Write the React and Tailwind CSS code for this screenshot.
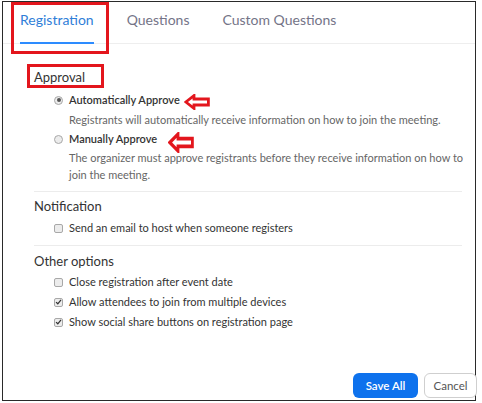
import React from "react";

const Arrow = ({ className }) => (
  <svg className={className} viewBox="0 0 26 16" preserveAspectRatio="none">
    <path d="M1.8 8 L10 1.6 L10 5 L24.4 5 L24.4 11 L10 11 L10 14.4 Z" fill="#fff" stroke="#e3161d" strokeWidth="2.8" strokeLinejoin="miter" />
  </svg>
);

const Radio = ({ checked }) => (
  <span className="w-[9px] h-[9px] rounded-full border border-[#a8a8a8] bg-[#ececec] flex items-center justify-center shrink-0">
    {checked && <span className="w-[4px] h-[4px] rounded-full bg-[#555]" />}
  </span>
);

const Check = ({ checked }) => (
  <span className="w-[9px] h-[9px] rounded-[2px] border border-[#a8a8a8] bg-[#ececec] flex items-center justify-center shrink-0">
    {checked && (
      <svg viewBox="0 0 10 10" className="w-[8px] h-[8px]">
        <path d="M1.5 5.2 L4 7.6 L8.6 2" fill="none" stroke="#333" strokeWidth="1.8" />
      </svg>
    )}
  </span>
);

export default function App() {
  return (
    <div className="relative w-[482px] h-[403px] bg-white overflow-hidden" style={{ fontFamily: "Lato, 'Open Sans', sans-serif" }}>
      <div className="ml-[2px] mt-[1px] w-[474px] h-[400px] border border-[#2a2a2a] flex flex-col">
        {/* tabs */}
        <div className="flex gap-[33px] pl-[17px] border-b border-[#eeeeee] h-[42px] items-end">
          <div className="text-[14px] leading-[20px] text-[#2f7ed8] pb-[12px] border-b-2 border-[#2d8cff] -mb-px">Registration</div>
          <div className="text-[14px] leading-[20px] text-[#747487] pb-[13px]">Questions</div>
          <div className="text-[14px] leading-[20px] text-[#747487] pb-[13px]">Custom Questions</div>
        </div>

        <div className="pl-[31px] pr-[13px]">
          <div className="mt-[25px] text-[13px] leading-[16px] text-[#333]">Approval</div>
          <div className="pl-[20px] mt-[5px]">
            <div className="flex items-center gap-[6px] h-[20px]">
              <Radio checked />
              <span className="text-[11px] font-semibold text-[#333]">Automatically Approve</span>
            </div>
            <div className="pl-[15px] text-[11px] leading-[19px] text-[#666]">
              Registrants will automatically receive information on how to join the meeting.
            </div>
            <div className="flex items-center gap-[6px] h-[20px]">
              <Radio />
              <span className="text-[11px] font-semibold text-[#333]">Manually Approve</span>
            </div>
            <div className="pl-[15px] text-[11px] leading-[17px] text-[#666] whitespace-nowrap">
              <div>The organizer must approve registrants before they receive information on how to</div>
              <div>join the meeting.</div>
            </div>
          </div>
          <div className="mt-[8px] border-t border-[#ececec]" />

          <div className="mt-[6px] text-[13px] leading-[16px] text-[#333]">Notification</div>
          <div className="pl-[20px] mt-[4px]">
            <div className="flex items-center gap-[6px] h-[20px]">
              <Check />
              <span className="text-[11px] text-[#333]">Send an email to host when someone registers</span>
            </div>
          </div>
          <div className="mt-[7px] border-t border-[#ececec]" />

          <div className="mt-[7px] text-[13px] leading-[16px] text-[#333]">Other options</div>
          <div className="pl-[20px] mt-[3px]">
            <div className="flex items-center gap-[6px] h-[20px]">
              <Check />
              <span className="text-[11px] text-[#333]">Close registration after event date</span>
            </div>
            <div className="flex items-center gap-[6px] h-[20px]">
              <Check checked />
              <span className="text-[11px] text-[#333]">Allow attendees to join from multiple devices</span>
            </div>
            <div className="flex items-center gap-[6px] h-[20px]">
              <Check checked />
              <span className="text-[11px] text-[#333]">Show social share buttons on registration page</span>
            </div>
          </div>
        </div>

        <div className="mt-[41px] flex justify-end gap-[6px] -mr-[2px]">
          <button className="w-[65px] h-[25px] rounded-[6px] bg-[#0e72ed] text-white text-[11.5px] font-semibold">Save All</button>
          <button className="w-[53px] h-[25px] rounded-[6px] border border-[#cfcfcf] bg-white text-[#555] text-[11.5px]">Cancel</button>
        </div>
      </div>

      {/* annotations */}
      <div className="absolute left-[11px] top-[2px] w-[98px] h-[52px] border-[3px] border-[#e3161d]" />
      <div className="absolute left-[27px] top-[64px] w-[77px] h-[24px] border-[3px] border-[#e3161d]" />
      <Arrow className="absolute left-[184px] top-[94px] w-[26px] h-[16px]" />
      <Arrow className="absolute left-[168px] top-[132px] w-[26px] h-[21px]" />
    </div>
  );
}
